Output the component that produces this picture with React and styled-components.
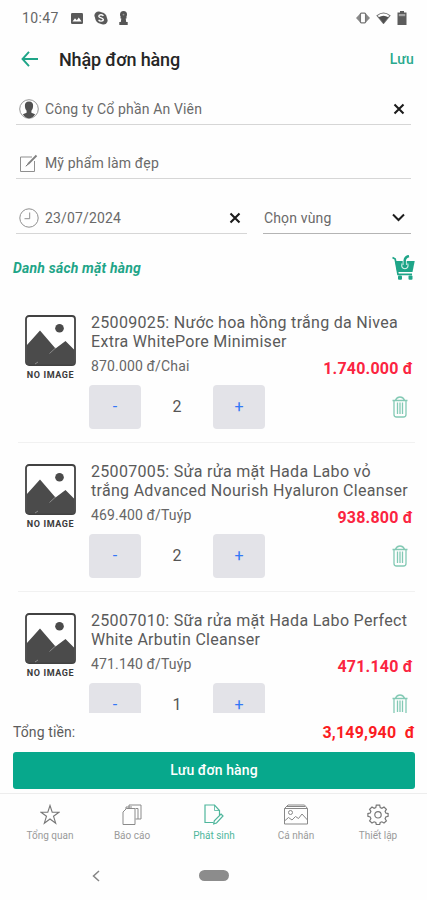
import React from "react";
import styled, { createGlobalStyle } from "styled-components";

const GlobalStyle = createGlobalStyle`
  * {
    box-sizing: border-box;
  }

  body {
    margin: 0;
    background: #fefefe;
    color: #4a4a4a;
    font-family: Roboto, "Noto Sans", sans-serif;
  }

  button {
    border: 0;
    padding: 0;
    background: none;
    font-family: inherit;
  }

  svg {
    display: block;
    flex-shrink: 0;
  }
`;

const Screen = styled.div`
  display: flex;
  flex-direction: column;
  width: 427px;
  height: 900px;
  overflow: hidden;
`;

const StatusBar = styled.div`
  display: flex;
  align-items: center;
  height: 36px;
  padding: 0 20px 0 22px;
`;

const Clock = styled.span`
  width: 49px;
  font-size: 14px;
  letter-spacing: 0.35px;
  color: #666;
`;

const StatusIcons = styled.div`
  display: flex;
  align-items: center;
  gap: ${(props) => props.$gap};
  margin-left: ${(props) => (props.$right ? "auto" : "0")};
`;

const Header = styled.header`
  display: flex;
  align-items: center;
  height: 46px;
  padding: 0 13px 0 21px;
`;

const Title = styled.h1`
  flex: 1;
  margin: 0 0 0 20px;
  font-size: 18px;
  font-weight: 500;
  letter-spacing: -0.15px;
  color: #262626;
`;

const SaveLink = styled.button`
  font-size: 14px;
  font-weight: 500;
  letter-spacing: 0.2px;
  color: #2aa98d;
`;

const Form = styled.div`
  display: grid;
  grid-template-columns: 231px 148px;
  column-gap: 16px;
  row-gap: 24px;
  padding: 12px 16px 0;
`;

const Field = styled.div`
  display: flex;
  align-items: center;
  grid-column: ${(props) => (props.$wide ? "1 / -1" : "auto")};
  height: 30.5px;
  padding: 0 6px 0 ${(props) => (props.$bare ? "1px" : "3px")};
  border-bottom: 1.5px solid ${(props) => (props.$bare ? "#b4b4b4" : "#d6d6d6")};
`;

const FieldText = styled.span`
  flex: 1;
  margin-left: ${(props) => (props.$bare ? "0" : "6px")};
  font-size: 14px;
  letter-spacing: 0.15px;
  color: #6a6a6a;
`;

const SectionHead = styled.div`
  display: flex;
  align-items: center;
  justify-content: space-between;
  height: 60px;
  padding: 8px 12px 0 13px;
`;

const SectionTitle = styled.h2`
  margin: 0;
  font-size: 14px;
  font-weight: 700;
  font-style: italic;
  letter-spacing: 0.2px;
  color: #1fa588;
`;

const List = styled.div`
  height: 419px;
  overflow: hidden;
`;

const Item = styled.div`
  display: flex;
  height: 149px;
  margin: 0 12px 0 18px;
  padding-top: 19px;
  border-bottom: 1.5px solid #f1f1f1;
`;

const Thumb = styled.div`
  display: flex;
  flex-direction: column;
  align-items: center;
  width: 51px;
  margin: 2px 15px 0 7px;
`;

const ThumbLabel = styled.span`
  margin-top: 3px;
  font-size: 9px;
  font-weight: 700;
  line-height: 12px;
  letter-spacing: 0.6px;
  white-space: nowrap;
  color: #3a3a3a;
`;

const ItemBody = styled.div`
  flex: 1;
`;

const ItemName = styled.div`
  height: 38px;
  font-size: 16px;
  line-height: 19px;
  letter-spacing: 0.3px;
  white-space: nowrap;
  color: #5a5a5a;
`;

const PriceRow = styled.div`
  display: flex;
  justify-content: space-between;
  height: 34px;
  padding: 7px 2px 0 0;
`;

const UnitPrice = styled.span`
  font-size: 14px;
  line-height: 17px;
  letter-spacing: 0.15px;
  color: #666;
`;

const Amount = styled.span`
  margin-top: 1px;
  font-size: 16px;
  font-weight: 700;
  line-height: 19px;
  letter-spacing: 0.2px;
  white-space: pre;
  color: ${(props) => (props.$total ? "#fb1c22" : "#fb2440")};
`;

const QtyRow = styled.div`
  display: flex;
  align-items: center;
  height: 44px;
  margin-left: -2px;
  padding-right: 7px;
`;

const QtyButton = styled.button`
  width: 52px;
  height: 44px;
  border-radius: 4px;
  background: #e3e3e8;
  font-size: 16px;
  color: #3478f6;
`;

const Qty = styled.span`
  width: 72px;
  font-size: 16px;
  text-align: center;
  color: #555;
`;

const DeleteButton = styled.button`
  margin-left: auto;
`;

const TotalRow = styled.div`
  display: flex;
  align-items: center;
  justify-content: space-between;
  height: 39px;
  padding: 0 12px 0 13px;
`;

const TotalLabel = styled.span`
  font-size: 14px;
  letter-spacing: 0.1px;
  color: #5c5c5c;
`;

const SubmitButton = styled.button`
  height: 37px;
  flex-shrink: 0;
  margin: 0 12px 4px 13px;
  border-radius: 3px;
  background: #07a88c;
  font-size: 14px;
  font-weight: 500;
  letter-spacing: 0.1px;
  color: #fff;
`;

const TabBar = styled.nav`
  display: grid;
  grid-template-columns: repeat(5, 82px);
  justify-content: center;
  height: 59px;
  padding: 10px 0 0 1px;
  border-top: 1px solid #ededed;
`;

const Tab = styled.div`
  display: flex;
  flex-direction: column;
  align-items: center;
  gap: 4px;
  font-size: 10px;
  line-height: 14px;
  color: ${(props) => (props.$active ? "#4fb69c" : "#9a9a9a")};
`;

const SystemNav = styled.div`
  display: flex;
  align-items: center;
  height: 48px;
  padding-left: 92px;
`;

const HomePill = styled.span`
  width: 30px;
  height: 11px;
  margin-left: 99px;
  border-radius: 6px;
  background: #8c8c8c;
`;

const GalleryIcon = () => (
  <svg width="12" height="11" viewBox="0 0 12 11">
    <rect width="12" height="11" rx="1.2" fill="#5a5a5a" />
    <path d="M1.5 8.5 4 5.2 5.8 7.3 7.8 4.5 10.6 8.5z" fill="#fff" />
  </svg>
);

const SkypeIcon = () => (
  <svg width="14" height="14" viewBox="0 0 14 14">
    <circle cx="4.6" cy="4.6" r="4.2" fill="#5a5a5a" />
    <circle cx="9.4" cy="9.4" r="4.2" fill="#5a5a5a" />
    <circle cx="7" cy="7" r="5.8" fill="#5a5a5a" />
    <path
      d="M9.3 4.9C8.7 3.3 4.8 3.4 4.8 5.3c0 2 4.5 1.2 4.5 3.3 0 2-4.1 1.9-4.6.1"
      fill="none"
      stroke="#fff"
      strokeWidth="1.4"
    />
  </svg>
);

const PawnIcon = () => (
  <svg width="9" height="14" viewBox="0 0 9 14">
    <circle cx="4.5" cy="3.6" r="3.5" fill="#555" />
    <path d="M1.5 6h6v1.4h-.8l.5 3.6h1.5v3H.3v-3h1.5l.5-3.6h-.8z" fill="#555" />
    <circle cx="4.5" cy="3.6" r="0.9" fill="#999" />
  </svg>
);

const VibrateIcon = () => (
  <svg width="14" height="12" viewBox="0 0 14 12">
    <path d="M4 1.8 0 6l4 4.2zM10 1.8 14 6l-4 4.2z" fill="#8a8a8a" />
    <rect x="4.400" y="1.200" width="5.200" height="9.600" rx="1" fill="#fff" stroke="#777" strokeWidth="1.300" />
  </svg>
);

const WifiIcon = () => (
  <svg width="15" height="12" viewBox="0 0 15 12">
    <path d="M1 3.600Q7.500-1.600 14 3.600L7.500 11.500z" fill="#fff" stroke="#777" strokeWidth="1.100" />
    <path d="M2.600 5.300Q7.500 2 12.400 5.300L7.500 11.600z" fill="#505050" />
  </svg>
);

const BatteryIcon = () => (
  <svg width="10" height="14" viewBox="0 0 10 14">
    <path d="M3 0h4v1.500h2.500V14h-9V1.500H3z" fill="#5c5c5c" />
    <path d="M1.800 3h6.400v2.200H1.800z" fill="#a4a4a4" />
  </svg>
);

const BackIcon = () => (
  <svg width="18" height="16" viewBox="0 0 18 16" fill="none" stroke="#1fa588" strokeWidth="1.900">
    <path d="M8 .8 1.500 8 8 15.200M1.500 8H17" />
  </svg>
);

const UserIcon = () => (
  <svg width="20" height="20" viewBox="0 0 20 20">
    <circle cx="10" cy="10" r="9.300" fill="none" stroke="#8a8a8a" strokeWidth="0.900" />
    <path
      d="M10 2.500c3 0 4.200 1.700 4.100 4.300 0 2.300-.7 4-1.700 5v2l3.700 1.500c-1.500 2.500-3.600 3.900-6.100 3.900s-4.600-1.400-6.100-3.900l3.700-1.500v-2c-1-1-1.700-2.700-1.700-5-.1-2.600 1.100-4.300 4.100-4.300z"
      fill="#505050"
    />
  </svg>
);

const NoteIcon = () => (
  <svg width="20" height="20" viewBox="0 0 20 20" fill="none" stroke="#8f8f8f">
    <path d="M13 4H1.500v14.500h14V8" />
    <path d="M9 11.200 17.500 2.500" stroke="#808080" strokeWidth="1.900" />
    <path d="m7 13.300 2-2.200" stroke="#555" />
  </svg>
);

const ClockIcon = () => (
  <svg width="20" height="20" viewBox="0 0 20 20" fill="none" stroke="#8f8f8f">
    <circle cx="10" cy="10" r="9.200" />
    <path d="M10.700 4.500V10.700H5.500" />
  </svg>
);

const ClearIcon = () => (
  <svg width="12" height="12" viewBox="0 0 12 12" stroke="#1c1c1c" strokeWidth="2.100">
    <path d="m1.500 1.500 9 9M10.500 1.500l-9 9" />
  </svg>
);

const ChevronIcon = () => (
  <svg width="13" height="9" viewBox="0 0 13 9" fill="none" stroke="#1c1c1c" strokeWidth="2">
    <path d="m1 1.500 5.500 5.500L12 1.500" />
  </svg>
);

const CartIcon = () => (
  <svg width="23" height="25" viewBox="0 0 23 25">
    <path d="M.5 2.500 3.200 4 6 19.300h14" fill="none" stroke="#1fa588" strokeWidth="1.700" />
    <path d="M3.200 6H22.700L20.500 17H5.200z" fill="#1fa588" />
    <path d="M12.700 10V5.500Q13 2 16.500 1" fill="none" stroke="#fff" strokeWidth="4" />
    <path d="M10 8.500q-1.200 5 2.900 5.200 4-.3 2.900-5.200" fill="none" stroke="#d8f0ea" strokeWidth="1.100" />
    <path d="M12.700 11.500V5.500Q13 2 17 1" fill="none" stroke="#1fa588" strokeWidth="2.500" />
    <rect x="6" y="20.500" width="4" height="4.200" rx="1" fill="#1fa588" />
    <rect x="16.500" y="20.500" width="4" height="4.200" rx="1" fill="#1fa588" />
  </svg>
);

const NoImageIcon = () => (
  <svg width="51" height="51" viewBox="0 0 51 51">
    <rect x="1" y="1" width="49" height="49" rx="3" fill="#fff" stroke="#424242" strokeWidth="1.800" />
    <path d="M1.500 30.500 15 15.500 30.500 33.500 40.500 26 49.500 35V49.500H1.500z" fill="#4b4b4b" />
    <path d="m24.500 38.500 6-5.500M10 49l3-2" stroke="#999" strokeWidth="0.800" />
    <circle cx="34.500" cy="13.200" r="4.300" fill="#4b4b4b" />
  </svg>
);

const TrashIcon = () => (
  <svg width="16" height="22" viewBox="0 0 16 22" fill="none" stroke="#83c9b4" strokeWidth="1.300">
    <path d="M.5 4.500h15M3.500 4Q5 1 8 1t4.500 3" />
    <path d="M2 5v13.500q0 2.500 2.500 2.500h7q2.500 0 2.500-2.500V5" />
    <path d="M5.500 6.500v11.500M8 6.500v11.500M10.500 6.500v11.500" />
  </svg>
);

const StarIcon = () => (
  <svg width="20" height="21" viewBox="0 0 20 21" fill="none" stroke="#777" strokeWidth="1.100">
    <path d="m10 1.500 2.200 6.700h6.800l-5.500 4 2.200 7L10 15l-5.700 4.200 2.200-7-5.500-4h6.800z" />
  </svg>
);

const ReportIcon = () => (
  <svg width="20" height="21" viewBox="0 0 20 21" fill="none" stroke="#8a8a8a" strokeWidth="1">
    <path d="M4.500 4.500H13v16H1V8z" />
    <path d="M7 4.500V1h12v14h-5.500M4 5V3h6" />
    <path d="M13.500 4.500h2.500V15" />
  </svg>
);

const CreateIcon = () => (
  <svg width="20" height="21" viewBox="0 0 20 21" fill="none" stroke="#4fb69c" strokeWidth="1.200">
    <path d="M9.500 18.500H1V1h9.500l5 5.500v4.500" />
    <path d="M10.500 1v5.500h5" strokeWidth="0.800" />
    <path d="m17 10 2 2-6.500 7-2.800.8.600-2.900z" />
  </svg>
);

const PhotoIcon = () => (
  <svg width="24" height="21" viewBox="0 0 24 21" fill="none" stroke="#888" strokeWidth="1">
    <path d="M.5 4.500h23v15.500H.5zM.5 4.500 4 1h16.500l3 3.500M3 2.500h18" />
    <circle cx="6.500" cy="8.500" r="2" />
    <path d="m.5 17 4-3.500 3.500 2.500 3.500-3.500 3 2 3.500-4.500 5.500 6" />
  </svg>
);

const GearIcon = () => (
  <svg width="22" height="21" viewBox="0 0 22 21" fill="none" stroke="#777" strokeWidth="1.200">
    <path d="M9.300 1.200h3.400l.5 2.400 1.700.7 2.100-1.300 2.400 2.400-1.300 2 .7 1.700 2.300.5v2.800l-2.300.6-.7 1.700 1.300 2.100-2.400 2.300-2.100-1.300-1.700.7-.5 2h-3.400l-.5-2-1.700-.7L5 19.100l-2.400-2.300 1.300-2.100-.7-1.700-2.300-.6V9.600l2.300-.5.700-1.700-1.300-2L5 3l2.100 1.300 1.700-.7z" />
    <circle cx="11" cy="10.800" r="3.200" />
  </svg>
);

const SystemBackIcon = () => (
  <svg width="8" height="12" viewBox="0 0 8 12" fill="none" stroke="#858585" strokeWidth="1.500">
    <path d="M7 1 1.500 6 7 11" />
  </svg>
);

const items = [
  {
    id: "25009025",
    lines: ["25009025: Nước hoa hồng trắng da Nivea", "Extra WhitePore Minimiser"],
    unit: "870.000 đ/Chai",
    amount: "1.740.000 đ",
    qty: 2,
  },
  {
    id: "25007005",
    lines: ["25007005: Sửa rửa mặt Hada Labo vỏ", "trắng Advanced Nourish Hyaluron Cleanser"],
    unit: "469.400 đ/Tuýp",
    amount: "938.800 đ",
    qty: 2,
  },
  {
    id: "25007010",
    lines: ["25007010: Sữa rửa mặt Hada Labo Perfect", "White Arbutin Cleanser"],
    unit: "471.140 đ/Tuýp",
    amount: "471.140 đ",
    qty: 1,
  },
];

const tabs = [
  { label: "Tổng quan", icon: <StarIcon /> },
  { label: "Báo cáo", icon: <ReportIcon /> },
  { label: "Phát sinh", icon: <CreateIcon />, active: true },
  { label: "Cá nhân", icon: <PhotoIcon /> },
  { label: "Thiết lập", icon: <GearIcon /> },
];

const OrderItem = ({ item }) => {
  return (
    <Item>
      <Thumb>
        <NoImageIcon />
        <ThumbLabel>NO IMAGE</ThumbLabel>
      </Thumb>
      <ItemBody>
        <ItemName>
          {item.lines[0]}
          <br />
          {item.lines[1]}
        </ItemName>
        <PriceRow>
          <UnitPrice>{item.unit}</UnitPrice>
          <Amount>{item.amount}</Amount>
        </PriceRow>
        <QtyRow>
          <QtyButton>-</QtyButton>
          <Qty>{item.qty}</Qty>
          <QtyButton>+</QtyButton>
          <DeleteButton aria-label="Xóa">
            <TrashIcon />
          </DeleteButton>
        </QtyRow>
      </ItemBody>
    </Item>
  );
};

const App = () => {
  return (
    <>
      <GlobalStyle />
      <Screen>
        <StatusBar>
          <Clock>10:47</Clock>
          <StatusIcons $gap="11px">
            <GalleryIcon />
            <SkypeIcon />
            <PawnIcon />
          </StatusIcons>
          <StatusIcons $gap="6px" $right>
            <VibrateIcon />
            <WifiIcon />
            <BatteryIcon />
          </StatusIcons>
        </StatusBar>

        <Header>
          <BackIcon />
          <Title>Nhập đơn hàng</Title>
          <SaveLink>Lưu</SaveLink>
        </Header>

        <Form>
          <Field $wide>
            <UserIcon />
            <FieldText>Công ty Cổ phần An Viên</FieldText>
            <ClearIcon />
          </Field>
          <Field $wide>
            <NoteIcon />
            <FieldText>Mỹ phẩm làm đẹp</FieldText>
          </Field>
          <Field>
            <ClockIcon />
            <FieldText>23/07/2024</FieldText>
            <ClearIcon />
          </Field>
          <Field $bare>
            <FieldText $bare>Chọn vùng</FieldText>
            <ChevronIcon />
          </Field>
        </Form>

        <SectionHead>
          <SectionTitle>Danh sách mặt hàng</SectionTitle>
          <button aria-label="Giỏ hàng">
            <CartIcon />
          </button>
        </SectionHead>

        <List>
          {items.map((item) => (
            <OrderItem key={item.id} item={item} />
          ))}
        </List>

        <TotalRow>
          <TotalLabel>Tổng tiền:</TotalLabel>
          <Amount $total>3,149,940  đ</Amount>
        </TotalRow>
        <SubmitButton>Lưu đơn hàng</SubmitButton>

        <TabBar>
          {tabs.map((tab) => (
            <Tab key={tab.label} $active={tab.active}>
              {tab.icon}
              {tab.label}
            </Tab>
          ))}
        </TabBar>

        <SystemNav>
          <SystemBackIcon />
          <HomePill />
        </SystemNav>
      </Screen>
    </>
  );
};

export default App;
